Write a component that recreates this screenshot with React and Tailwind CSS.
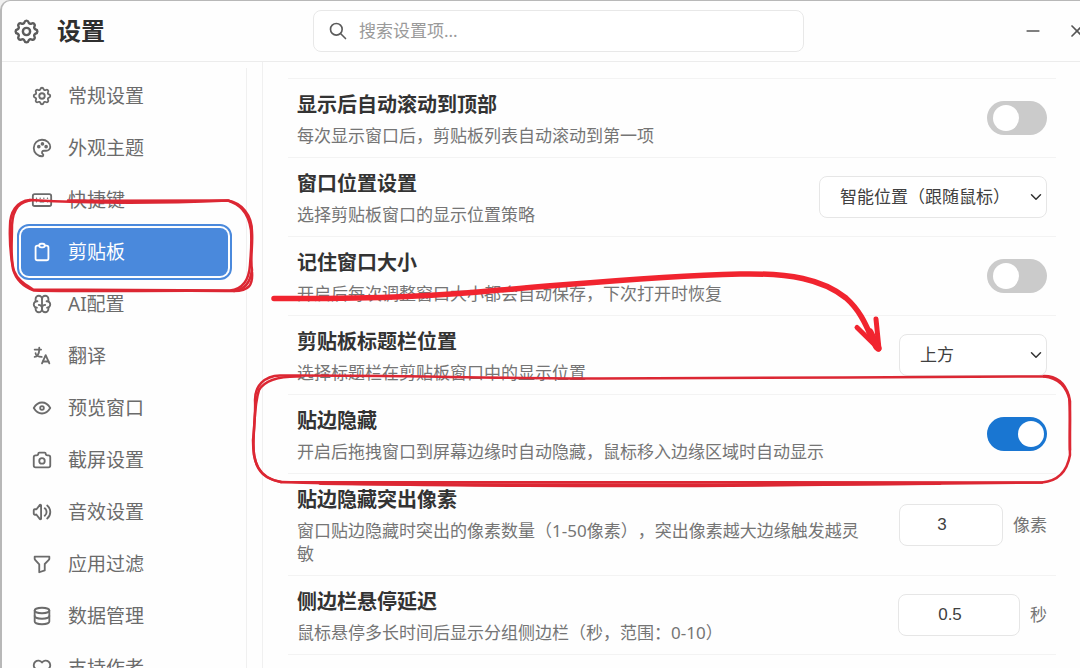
import { useState } from "react";
import {
  TbSettings, TbPalette, TbClipboard, TbBrain, TbLanguage, TbEye,
  TbCamera, TbVolume, TbFilter, TbDatabase, TbHeart, TbSearch, TbMinus, TbX, TbChevronDown,
} from "react-icons/tb";

function KeyboardIcon(props) {
  return (
    <svg viewBox="0 0 24 24" fill="none" stroke="currentColor" strokeLinecap="round" strokeLinejoin="round" {...props}>
      <rect x="2" y="5.500" width="20" height="13" rx="2" strokeWidth="2" />
      <path d="M6 10h.01M10 10h.01M14 10h.01M18 10h.01M6 14h.01M18 14h.01M10 14h4" strokeWidth="1.600" />
    </svg>
  );
}

const NAV = [
  ["常规设置", TbSettings],
  ["外观主题", TbPalette],
  ["快捷键", KeyboardIcon],
  ["剪贴板", TbClipboard],
  ["AI配置", TbBrain],
  ["翻译", TbLanguage],
  ["预览窗口", TbEye],
  ["截屏设置", TbCamera],
  ["音效设置", TbVolume],
  ["应用过滤", TbFilter],
  ["数据管理", TbDatabase],
  ["支持作者", TbHeart],
];

function Row({ id, title, desc, children }) {
  return (
    <div className="flex items-center gap-7 border-b border-[#f3f3f3] px-[9px] py-[10px]">
      <div className="min-w-0 flex-1 pt-[3px]">
        <label htmlFor={id} className="block text-[20px] leading-[26px] font-bold text-[#333333]">{title}</label>
        <p className="mt-[6px] text-[17px] leading-[23px] text-[#757575] [text-spacing-trim:space-all]">{desc}</p>
      </div>
      <div className="flex shrink-0 items-center gap-[10px]">{children}</div>
    </div>
  );
}

function Toggle({ id, defaultChecked }) {
  return (
    <span className="relative block h-[34px] w-[60px]">
      <input
        id={id}
        type="checkbox"
        role="switch"
        defaultChecked={defaultChecked}
        className="peer block h-full w-full cursor-pointer appearance-none rounded-full bg-[#cbcbcb] checked:bg-[#1976d2]"
      />
      <span className="pointer-events-none absolute top-1 left-[6px] size-[26px] rounded-full bg-white peer-checked:left-[31px]" />
    </span>
  );
}

function Select({ id, options, className }) {
  return (
    <span className="relative block">
      <select
        id={id}
        className={`block h-[42px] appearance-none rounded-lg border border-[#e6e6e6] bg-white pr-9 pl-5 text-[17px] text-[#404040] ${className}`}
      >
        {options.map((o) => <option key={o}>{o}</option>)}
      </select>
      <TbChevronDown aria-hidden="true" className="pointer-events-none absolute top-3 right-[2px] size-[18px] text-[#333333]" />
    </span>
  );
}

function NumberField({ id, value, unit, className }) {
  return (
    <>
      <input
        id={id}
        type="number"
        step="any"
        defaultValue={value}
        className={`h-[42px] rounded-lg border border-[#e6e6e6] bg-white pr-[18px] text-center font-['Liberation_Sans',sans-serif] text-[17px] text-[#404040] [appearance:textfield] [&::-webkit-inner-spin-button]:appearance-none ${className}`}
      />
      <span className="text-[17px] text-[#757575]">{unit}</span>
    </>
  );
}

function Annotations() {
  return (
    <svg
      aria-hidden="true"
      viewBox="0 0 1080 668"
      className="pointer-events-none absolute top-0 left-0 h-[668px] w-[1080px]"
      fill="none"
      stroke="#dc2733"
      strokeLinecap="round"
      strokeLinejoin="round"
    >
      <g strokeWidth="2.5">
        <path d="M30 200C16 201 10 213 10 226C9 248 12 262 13 269C16 280 24 287 34 290.5C90 292 170 290 234 291C249 291 253 285 252 272" />
        <path d="M33 200C20 201 13 208 12 225C12 246 10 258 14 271C18 281 26 285 33 289.5L230 290.5C243 289 249 280 250 265C251 250 252 245 251 230C248 210 238 204 228 200.5C170 203 100 204 30 200" />
        <path d="M68 200.5C120 201 170 201 228 200.5C241 203 252 214 252 232C253 246 250 258 252 270C250 285 243 290 234 291" />
      </g>
      <g strokeWidth="2.5">
        <path d="M1044 376.500C900 377 740 378 600 378.500C480 378 380 375 280 375.500C264 376 255 386 255 400C256 420 252 435 254 455C257 473 266 479 281 482" />
        <path d="M300 376.500C278 376 265 380 259 390C254 405 255 425 253 440C253 462 258 478 281 482C400 483 600 483 1042 482.500" />
        <path d="M281 482C400 486 640 487 800 485C900 484 980 483 1042 482.500C1058 481 1067 472 1070 455C1069 430 1071 415 1069 396C1065 383 1057 376 1044 376" />
        <path d="M1044 376.500C1060 378 1067 388 1070 401V450" />
        <path d="M320 483.500C500 485.500 700 485 940 483.500" strokeWidth="3" />
      </g>
      <g stroke="#f1242f" strokeWidth="5.500">
        <path d="M274 298.500C340 299 420 298 500 290C580 284 650 276 740 274C790 273 822 279 846 298C863 313 868 331 876 347" />
        <path d="M857 327.500L879 349L876 319" strokeWidth="5" />
        <path d="M870 332L878 348" strokeWidth="7" />
      </g>
    </svg>
  );
}

export default function App() {
  const [active, setActive] = useState("剪贴板");
  return (
    <div className="h-screen bg-[#f0f0f0] font-['Noto_Sans','Noto_Sans_CJK_SC',sans-serif]">
      <div className="relative flex h-full flex-col overflow-hidden rounded-tl-[10px] border-t border-l-2 border-[#b8b8b8] bg-[#fefefe]">
        <header className="flex h-[61px] shrink-0 items-center border-b border-[#ececec]">
          <div className="flex w-[311px] shrink-0 items-center gap-4 pl-[10px]">
            <TbSettings aria-hidden="true" className="size-[29px] text-[#5c5c5c]" />
            <h1 className="text-[24px] leading-8 font-bold text-[#2f2f2f]">设置</h1>
          </div>
          <label className="flex h-[42px] min-w-0 max-w-[491px] flex-1 items-center gap-[11px] rounded-lg border border-[#e8e8e8] bg-white px-[14px]">
            <TbSearch aria-hidden="true" className="size-[20px] shrink-0 text-[#5c5c5c]" />
            <input
              type="text"
              aria-label="搜索设置项"
              placeholder="搜索设置项..."
              className="min-w-0 flex-1 bg-transparent text-[17px] text-[#404040] outline-none placeholder:text-[#9a9a9a]"
            />
          </label>
          <div className="-mr-[19px] ml-auto flex text-[#555555]">
            <button type="button" aria-label="最小化" className="flex h-10 w-11 items-center justify-center"><TbMinus className="size-[20px]" /></button>
            <button type="button" aria-label="关闭" className="flex h-10 w-11 items-center justify-center"><TbX className="size-[20px]" /></button>
          </div>
        </header>

        <div className="flex min-h-0 flex-1">
          <aside className="w-[261px] shrink-0 overflow-hidden border-r border-[#f0f0f0] pt-[6px] pr-[15px]">
            <nav aria-label="设置分类" className="flex h-full flex-col gap-1 border-r border-[#f0f0f0] pt-1 pr-[18px] pl-[19px]">
              {NAV.map(([name, Icon]) => (
                <button
                  key={name}
                  type="button"
                  aria-current={active === name ? "page" : undefined}
                  onClick={() => setActive(name)}
                  className={`flex h-12 shrink-0 items-center gap-[15px] rounded-lg px-[10px] text-[19px] ${
                    active === name
                      ? "bg-[#4a89dc] text-white outline-2 outline-offset-2 outline-[#4a89dc]"
                      : "text-[#6b6b6b]"
                  }`}
                >
                  <Icon aria-hidden="true" className="size-[22px]" />
                  {name}
                </button>
              ))}
            </nav>
          </aside>

          <main className="min-w-0 flex-1 overflow-hidden pr-6 pl-[25px]">
            <div className="h-[17px] border-b border-[#f3f3f3]" />
            <Row id="scroll-top" title="显示后自动滚动到顶部" desc="每次显示窗口后，剪贴板列表自动滚动到第一项">
              <Toggle id="scroll-top" />
            </Row>
            <Row id="position" title="窗口位置设置" desc="选择剪贴板窗口的显示位置策略">
              <Select id="position" options={["智能位置（跟随鼠标）"]} className="w-[228px]" />
            </Row>
            <Row id="remember-size" title="记住窗口大小" desc="开启后每次调整窗口大小都会自动保存，下次打开时恢复">
              <Toggle id="remember-size" />
            </Row>
            <Row id="title-bar" title="剪贴板标题栏位置" desc="选择标题栏在剪贴板窗口中的显示位置">
              <Select id="title-bar" options={["上方"]} className="w-[148px]" />
            </Row>
            <Row id="edge-hide" title="贴边隐藏" desc="开启后拖拽窗口到屏幕边缘时自动隐藏，鼠标移入边缘区域时自动显示">
              <Toggle id="edge-hide" defaultChecked />
            </Row>
            <Row id="edge-pixels" title="贴边隐藏突出像素" desc="窗口贴边隐藏时突出的像素数量（1-50像素），突出像素越大边缘触发越灵敏">
              <NumberField id="edge-pixels" value="3" unit="像素" className="w-[104px]" />
            </Row>
            <Row id="hover-delay" title="侧边栏悬停延迟" desc="鼠标悬停多长时间后显示分组侧边栏（秒，范围：0-10）">
              <NumberField id="hover-delay" value="0.5" unit="秒" className="w-[122px]" />
            </Row>
          </main>
        </div>
      </div>
      <Annotations />
    </div>
  );
}
